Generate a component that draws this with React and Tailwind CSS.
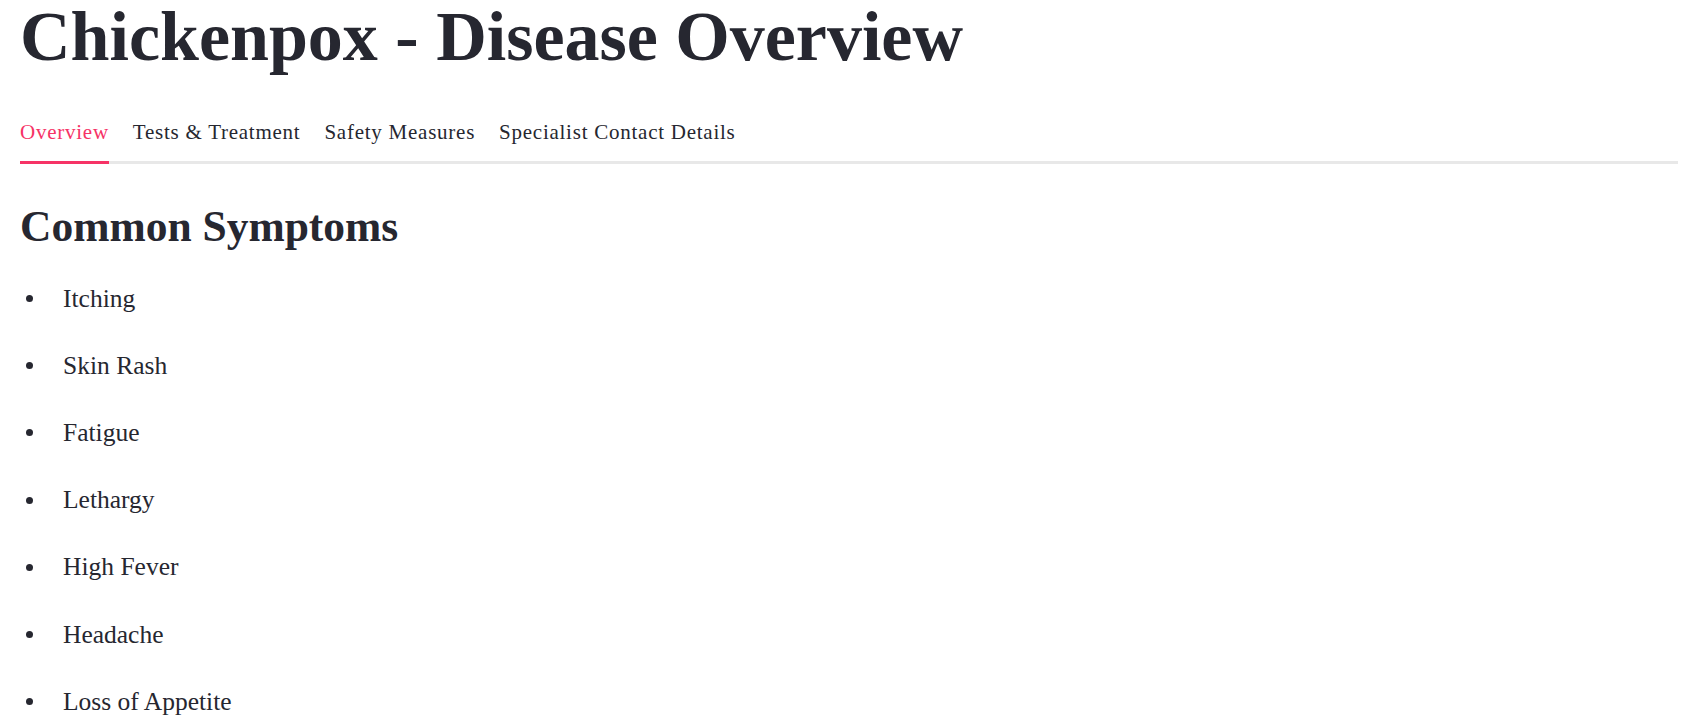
import React from "react";

const tabs = ["Overview", "Tests & Treatment", "Safety Measures", "Specialist Contact Details"];
const symptoms = ["Itching", "Skin Rash", "Fatigue", "Lethargy", "High Fever", "Headache", "Loss of Appetite"];

export default function App() {
  return (
    <div className="min-h-screen bg-white pl-5 pr-6 text-[#262730] font-['Liberation_Serif',serif]">
      <h1 className="pt-[1px] text-[70px] font-bold leading-[72px]">
        Chickenpox - Disease Overview
      </h1>
      <div className="mt-[47px] flex gap-6 border-b-[3px] border-[#e8e8e8]">
        {tabs.map((t, i) => (
          <div
            key={t}
            className={
              i === 0
                ? "-mb-[3px] border-b-[3px] border-[#f63366] pb-[14px] text-[21px] leading-[24px] tracking-[0.75px] text-[#f63366]"
                : "pb-[17px] text-[21px] leading-[24px] tracking-[0.75px]"
            }
          >
            {t}
          </div>
        ))}
      </div>
      <h2 className="mt-[37px] text-[43.5px] font-bold leading-[50px]">Common Symptoms</h2>
      <ul className="mt-[14px]">
        {symptoms.map((s) => (
          <li key={s} className="flex h-[67.2px] items-center">
            <span className="ml-[6px] h-[7px] w-[7px] rounded-full bg-[#262730]" />
            <span className="ml-[30px] text-[25.5px] leading-[30px]">{s}</span>
          </li>
        ))}
      </ul>
    </div>
  );
}
